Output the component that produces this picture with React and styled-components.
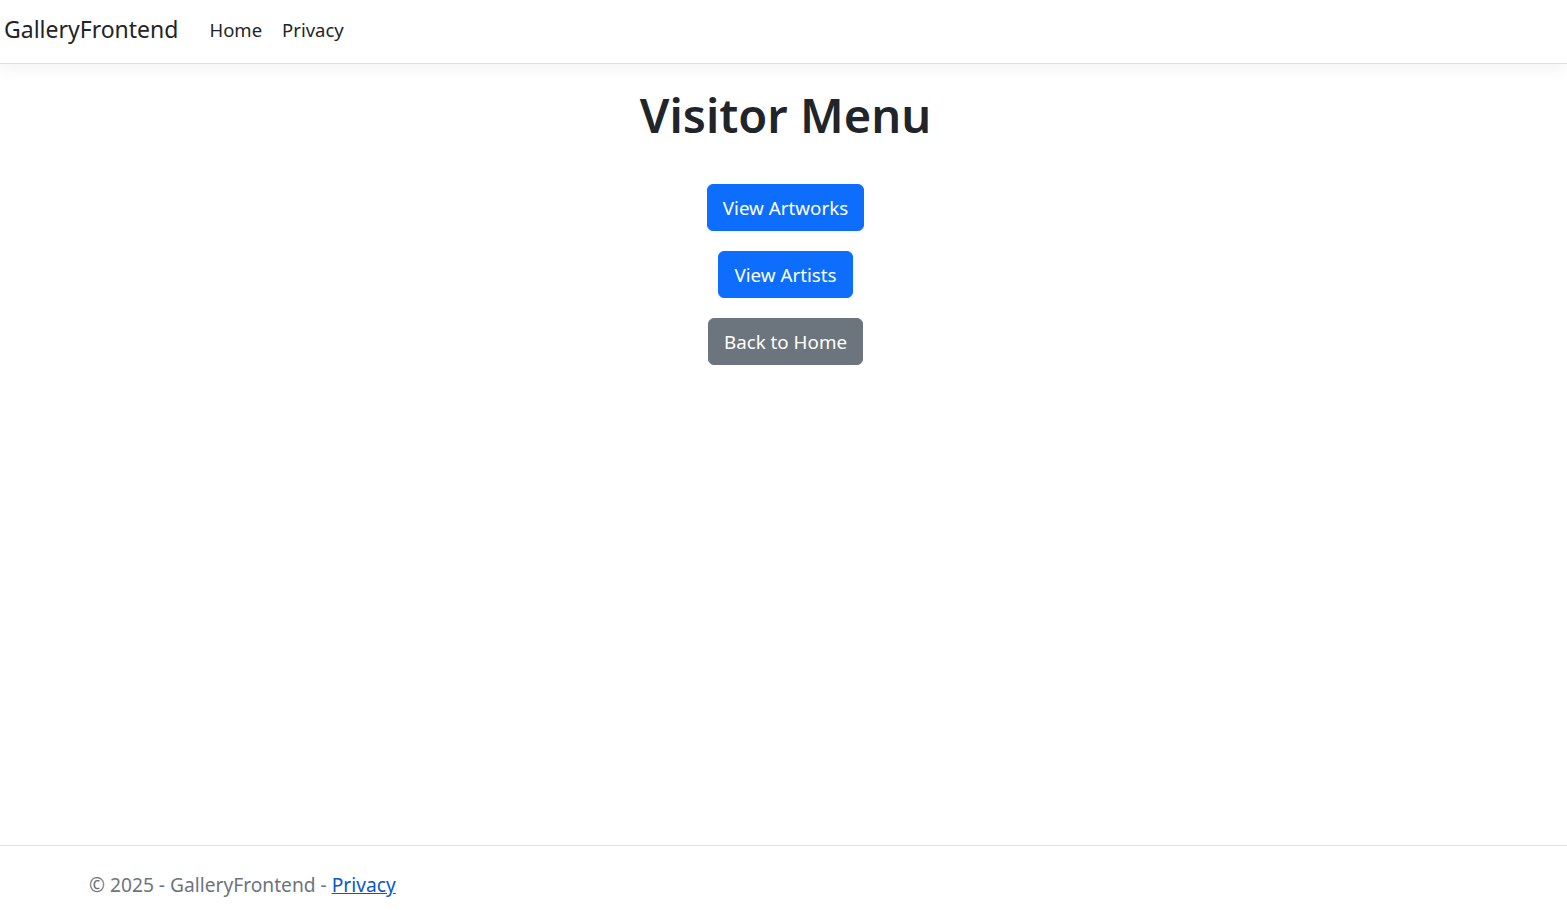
import React from "react";
import styled, { createGlobalStyle } from "styled-components";

const GlobalStyle = createGlobalStyle`
  html, body {
    margin: 0;
    padding: 0;
    background: #fff;
  }
  body {
    font-family: "Noto Sans", "Open Sans", sans-serif;
    color: #212529;
  }
  * {
    box-sizing: border-box;
  }
`;

const Page = styled.div`
  display: flex;
  flex-direction: column;
  min-height: 100vh;
  height: 910px;
  overflow: hidden;
`;

const Navbar = styled.header`
  display: flex;
  align-items: center;
  height: 64px;
  padding: 0 4px 5px;
  border-bottom: 1px solid #dee2e6;
  box-shadow: 0 5px 15px rgba(0, 0, 0, 0.05);
  background: #fff;
`;

const Brand = styled.a`
  font-size: 23px;
  color: #212529;
  text-decoration: none;
  margin-right: 21px;
`;

const NavLinks = styled.nav`
  display: flex;
`;

const NavLink = styled.a`
  font-size: 18.5px;
  color: #212529;
  text-decoration: none;
  padding: 8px 10px;
`;

const Main = styled.main`
  flex: 1;
  display: flex;
  flex-direction: column;
  align-items: center;
  padding: 23px 0 0 4px;
`;

const Title = styled.h1`
  margin: 0 0 41px;
  font-size: 47px;
  font-weight: 600;
  line-height: 1.2;
  color: #212529;
`;

const ButtonStack = styled.div`
  display: flex;
  flex-direction: column;
  align-items: center;
  gap: 20px;
`;

const Button = styled.a`
  display: inline-block;
  font-size: 18.8px;
  line-height: 30px;
  padding: 7.5px 15px;
  border: 1px solid ${(p) => (p.$variant === "secondary" ? "#6c757d" : "#0d6efd")};
  border-radius: 6px;
  background: ${(p) => (p.$variant === "secondary" ? "#6c757d" : "#0d6efd")};
  color: #fff;
  text-decoration: none;
  cursor: pointer;
`;

const Footer = styled.footer`
  height: 65px;
  border-top: 1px solid #dee2e6;
  padding: 27px 0 0 89px;
  font-size: 19.2px;
  line-height: 24px;
  color: #6c757d;
`;

const FooterLink = styled.a`
  color: #0a58ca;
  text-decoration: underline;
`;

export default function App() {
  return (
    <>
      <GlobalStyle />
      <Page>
        <Navbar>
          <Brand href="#">GalleryFrontend</Brand>
          <NavLinks>
            <NavLink href="#">Home</NavLink>
            <NavLink href="#">Privacy</NavLink>
          </NavLinks>
        </Navbar>
        <Main>
          <Title>Visitor Menu</Title>
          <ButtonStack>
            <Button href="#">View Artworks</Button>
            <Button href="#">View Artists</Button>
            <Button href="#" $variant="secondary">Back to Home</Button>
          </ButtonStack>
        </Main>
        <Footer>
          © 2025 - GalleryFrontend - <FooterLink href="#">Privacy</FooterLink>
        </Footer>
      </Page>
    </>
  );
}
